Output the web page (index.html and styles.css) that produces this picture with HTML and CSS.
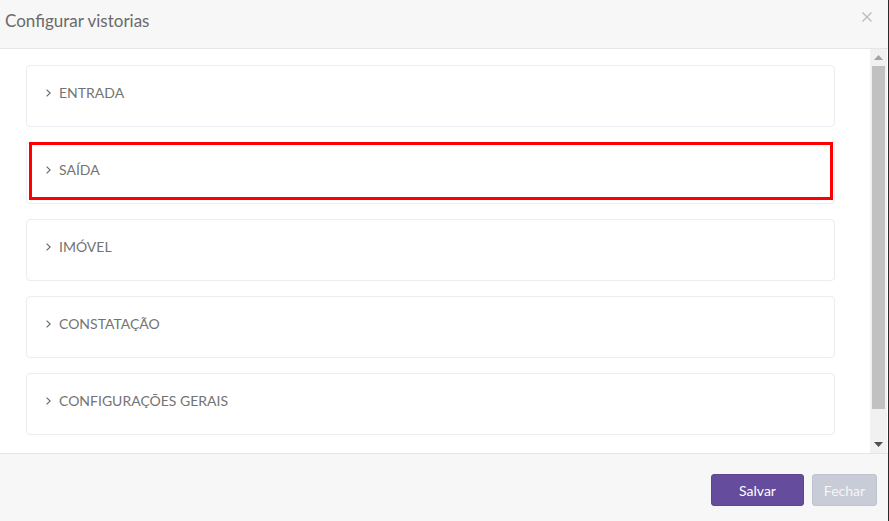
FILE: index.html
```html
<!DOCTYPE html>
<html lang="pt">
<head>
<meta charset="utf-8">
<title>Configurar vistorias</title>
<link rel="stylesheet" href="styles.css">
</head>
<body>
<div class="modal">
  <header class="modal-header">
    <h1 class="modal-title">Configurar vistorias</h1>
    <button class="close" aria-label="Fechar">
      <svg width="10" height="10" viewBox="0 0 10 10"><path d="M0.5 0.5L9.5 9.5M9.5 0.5L0.5 9.5" stroke="#bbbbbb" stroke-width="1.3" fill="none"/></svg>
    </button>
  </header>
  <div class="modal-body">
    <div class="content">
      <div class="panel"><svg class="chev" width="5" height="8" viewBox="0 0 5 8"><path d="M0.6 0.6L4.2 4L0.6 7.4" stroke="#666" stroke-width="1.1" fill="none"/></svg><span>ENTRADA</span></div>
      <div class="panel"><svg class="chev" width="5" height="8" viewBox="0 0 5 8"><path d="M0.6 0.6L4.2 4L0.6 7.4" stroke="#666" stroke-width="1.1" fill="none"/></svg><span>SAÍDA</span></div>
      <div class="panel"><svg class="chev" width="5" height="8" viewBox="0 0 5 8"><path d="M0.6 0.6L4.2 4L0.6 7.4" stroke="#666" stroke-width="1.1" fill="none"/></svg><span>IMÓVEL</span></div>
      <div class="panel"><svg class="chev" width="5" height="8" viewBox="0 0 5 8"><path d="M0.6 0.6L4.2 4L0.6 7.4" stroke="#666" stroke-width="1.1" fill="none"/></svg><span>CONSTATAÇÃO</span></div>
      <div class="panel"><svg class="chev" width="5" height="8" viewBox="0 0 5 8"><path d="M0.6 0.6L4.2 4L0.6 7.4" stroke="#666" stroke-width="1.1" fill="none"/></svg><span>CONFIGURAÇÕES GERAIS</span></div>
      <div class="highlight"></div>
    </div>
    <div class="scrollbar">
      <div class="arrow"><svg width="9" height="5" viewBox="0 0 9 5"><path d="M0 5L4.5 0L9 5Z" fill="#a3a3a3"/></svg></div>
      <div class="track"><div class="thumb"></div></div>
      <div class="arrow"><svg width="9" height="5" viewBox="0 0 9 5"><path d="M0 0L4.5 5L9 0Z" fill="#505050"/></svg></div>
    </div>
  </div>
  <footer class="modal-footer">
    <button class="btn btn-primary">Salvar</button>
    <button class="btn btn-disabled">Fechar</button>
  </footer>
</div>
</body>
</html>
```

FILE: styles.css
```css
html, body {
  margin: 0;
  padding: 0;
  background: #ffffff;
}
body {
  font-family: Lato, "Open Sans", Arial, sans-serif;
  width: 889px;
  height: 521px;
  overflow: hidden;
}
.modal {
  width: 888px;
  height: 521px;
  border-right: 1px solid #2a2a2a;
  display: flex;
  flex-direction: column;
}
.modal-header {
  height: 48px;
  background: #f7f7f7;
  border-bottom: 1px solid #e6e6e6;
  display: flex;
  align-items: center;
  justify-content: space-between;
  padding: 0 16px 0 5px;
  flex: none;
}
.modal-title {
  margin: 0;
  font-size: 17px;
  font-weight: 400;
  color: #6a6a6a;
  position: relative;
  top: -4px;
}
.close {
  border: 0;
  background: none;
  padding: 0;
  width: 10px;
  height: 10px;
  display: flex;
  position: relative;
  top: -7px;
}
.modal-body {
  height: 404px;
  display: flex;
  flex: none;
}
.content {
  width: 870px;
  padding: 16px 0 0 26px;
  box-sizing: border-box;
  display: flex;
  flex-direction: column;
  gap: 15px;
  position: relative;
}
.panel {
  width: 809px;
  height: 62px;
  flex: none;
  box-sizing: border-box;
  border: 1px solid #ececf2;
  border-radius: 4px;
  background: #fff;
  display: flex;
  align-items: flex-start;
  padding: 17px 0 0 19px;
  font-size: 14px;
  line-height: 20px;
  color: #737373;
}
.chev {
  margin: 6px 8px 0 0;
  flex: none;
}
.highlight {
  position: absolute;
  left: 29px;
  top: 93px;
  width: 804px;
  height: 58px;
  box-sizing: border-box;
  border: 3px solid #ff0000;
}
.scrollbar {
  width: 17px;
  background: #f1f1f1;
  display: flex;
  flex-direction: column;
}
.arrow {
  height: 17px;
  display: flex;
  align-items: center;
  justify-content: center;
  flex: none;
}
.track {
  flex: 1;
  padding: 0 2px;
  display: flex;
  flex-direction: column;
}
.thumb {
  height: 343px;
  background: #c1c1c1;
}
.modal-footer {
  flex: 1;
  background: #f7f7f7;
  border-top: 1px solid #e6e6e6;
  display: flex;
  justify-content: flex-end;
  align-items: flex-start;
  gap: 8px;
  padding: 20px 11px 0 0;
}
.btn {
  height: 32px;
  border-radius: 3px;
  font-family: Lato, "Open Sans", Arial, sans-serif;
  font-size: 14px;
  color: #ffffff;
  padding: 0;
}
.btn-primary {
  width: 93px;
  background: #654c9c;
  border: 1px solid #5d4592;
}
.btn-disabled {
  width: 65px;
  background: #c8ccd7;
  border: 1px solid #bfc3cf;
  color: #f4f5f8;
}
```
